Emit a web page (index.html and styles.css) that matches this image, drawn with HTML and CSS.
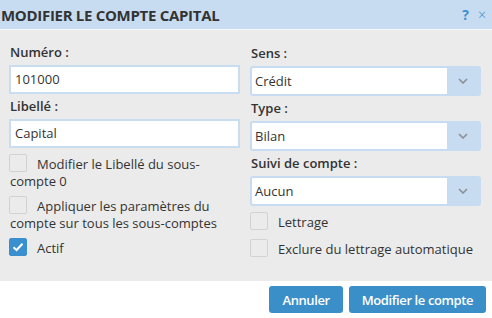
FILE: index.html
```html
<!DOCTYPE html>
<html lang="fr">
<head>
<meta charset="utf-8">
<link rel="stylesheet" href="styles.css">
</head>
<body>
<div class="dialog">
  <div class="header">
    <span class="title">MODIFIER LE COMPTE CAPITAL</span>
    <span class="tools"><span class="help">?</span><span class="close">×</span></span>
  </div>
  <div class="content">
    <div class="col">
      <div class="label">Numéro :</div>
      <div class="input">101000</div>
      <div class="label">Libellé :</div>
      <div class="input">Capital</div>
      <div class="checks">
        <div class="check"><span class="box"></span>Modifier le Libellé du sous-compte 0</div>
        <div class="check"><span class="box"></span>Appliquer les paramètres du compte sur tous les sous-comptes</div>
        <div class="check"><span class="box on"><svg width="12" height="10" viewBox="0 0 12 10"><path d="M1.5 5.2 L4.6 8 L10.5 1.8" fill="none" stroke="#fff" stroke-width="2"/></svg></span>Actif</div>
      </div>
    </div>
    <div class="col right">
      <div class="label">Sens :</div>
      <div class="select"><span class="value">Crédit</span><span class="arrow"><svg width="10" height="6" viewBox="0 0 10 6"><path d="M1 1 L5 5 L9 1" fill="none" stroke="#8a8f94" stroke-width="1.6"/></svg></span></div>
      <div class="label">Type :</div>
      <div class="select"><span class="value">Bilan</span><span class="arrow"><svg width="10" height="6" viewBox="0 0 10 6"><path d="M1 1 L5 5 L9 1" fill="none" stroke="#8a8f94" stroke-width="1.6"/></svg></span></div>
      <div class="label">Suivi de compte :</div>
      <div class="select"><span class="value">Aucun</span><span class="arrow"><svg width="10" height="6" viewBox="0 0 10 6"><path d="M1 1 L5 5 L9 1" fill="none" stroke="#8a8f94" stroke-width="1.6"/></svg></span></div>
      <div class="checks right">
        <div class="check"><span class="box"></span>Lettrage</div>
        <div class="check"><span class="box"></span>Exclure du lettrage automatique</div>
      </div>
    </div>
  </div>
  <div class="footer">
    <button class="btn">Annuler</button>
    <button class="btn">Modifier le compte</button>
  </div>
</div>
</body>
</html>
```

FILE: styles.css
```css
* { box-sizing: border-box; }
html, body { margin: 0; padding: 0; background: #fff; }
body {
  font-family: "Open Sans", "DejaVu Sans", sans-serif;
  font-size: 13px;
  color: #333;
}
.dialog { width: 492px; height: 318px; display: flex; flex-direction: column; }
.header {
  height: 30px;
  background: #c7dcf1;
  border-bottom: 1px solid #f4f8fc;
  display: flex;
  align-items: center;
  justify-content: space-between;
  padding: 0 6px 0 1px;
}
.title { font-weight: 700; font-size: 15px; letter-spacing: -0.3px; color: #333; }
.tools { display: flex; align-items: center; gap: 9px; color: #3b8fd0; }
.help { font-weight: 700; font-size: 14px; }
.close { font-size: 14px; font-weight: 300; }
.content {
  background: #ebebeb;
  height: 251px;
  padding: 10px 11px 0 9px;
  display: grid;
  grid-template-columns: 231px 231px;
  column-gap: 10px;
  align-items: start;
}
.col { display: flex; flex-direction: column; }
.col.right { padding-top: 1px; }
.label { font-weight: 600; line-height: 18px; margin: 3px 1px 4px; }
.input {
  height: 29px;
  background: #fff;
  border: 2px solid #c9ddf0;
  padding: 0 4px;
  line-height: 25px;
}
.select {
  height: 30px;
  background: #fff;
  border: 2px solid #c7dcf1;
  border-radius: 3px;
  display: flex;
  line-height: 26px;
}
.select .value { flex: 1; padding: 0 3px; }
.select .arrow {
  width: 32px;
  background: #c7dcf1;
  display: flex;
  align-items: center;
  justify-content: center;
}
.checks { display: flex; flex-direction: column; gap: 6px; margin-top: 6px; }
.checks.right { margin-top: 6px; gap: 8px; }
.check { line-height: 17px; padding-left: 1px; }
.box {
  display: inline-block;
  width: 18px;
  height: 18px;
  border: 1px solid #d2d2d2;
  border-radius: 2px;
  background: #ebebeb;
  vertical-align: -3px;
  margin-right: 10px;
  margin-left: -1px;
  position: relative;
}
.box.on { background: #3a8fce; border-color: #3a8fce; }
.box.on svg { position: absolute; left: 2px; top: 3px; }
.footer {
  flex: 1;
  background: #fff;
  display: flex;
  justify-content: flex-end;
  align-items: flex-start;
  gap: 6px;
  padding: 5px 6px 0 0;
}
.btn {
  height: 27px;
  border: none;
  border-radius: 3px;
  background: #3a8fc8;
  color: #fff;
  font-family: inherit;
  font-size: 13px;
  font-weight: 600;
  letter-spacing: -0.4px;
  padding: 0 13px;
}
```
